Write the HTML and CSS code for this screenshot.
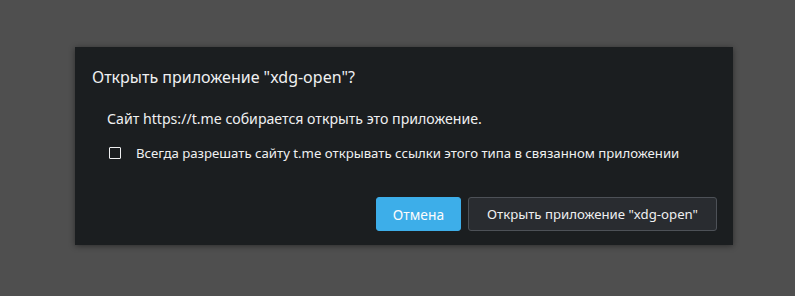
FILE: index.html
```html
<!DOCTYPE html>
<html lang="ru">
<head>
<meta charset="utf-8">
<link rel="stylesheet" href="styles.css">
</head>
<body>
<div class="dialog">
  <div class="title">Открыть приложение "xdg-open"?</div>
  <div class="message">Сайт https://t.me собирается открыть это приложение.</div>
  <label class="check-row">
    <span class="checkbox"></span>
    <span class="check-label">Всегда разрешать сайту t.me открывать ссылки этого типа в связанном приложении</span>
  </label>
  <div class="actions">
    <button class="btn btn-primary">Отмена</button>
    <button class="btn btn-secondary">Открыть приложение "xdg-open"</button>
  </div>
</div>
</body>
</html>
```

FILE: styles.css
```css
html, body {
  margin: 0;
  padding: 0;
}
body {
  background: #4f4f4f;
  width: 795px;
  height: 296px;
  overflow: hidden;
  font-family: "Noto Sans", "Open Sans", sans-serif;
  padding-top: 47px;
  padding-left: 75px;
  box-sizing: border-box;
}
.dialog {
  width: 658px;
  height: 198px;
  box-sizing: border-box;
  background: #1b1e20;
  box-shadow: 0 1px 6px rgba(0,0,0,0.45);
  padding: 19px 16px 14px 17px;
  display: flex;
  flex-direction: column;
  color: #fcfcfc;
}
.title {
  font-size: 16px;
  line-height: 22px;
  color: #eff0f1;
}
.message {
  margin-top: 21px;
  margin-left: 15px;
  font-size: 14.15px;
  line-height: 19px;
  color: #eff0f1;
}
.check-row {
  margin-top: 16px;
  margin-left: 17px;
  display: flex;
  align-items: center;
  gap: 15px;
  font-size: 13.2px;
  line-height: 18px;
  color: #eff0f1;
}
.checkbox {
  width: 12px;
  height: 12px;
  box-sizing: border-box;
  border: 1.5px solid #eff0f1;
  border-radius: 1px;
}
.actions {
  margin-top: auto;
  display: flex;
  justify-content: flex-end;
  gap: 7px;
}
.btn {
  height: 34px;
  box-sizing: border-box;
  font-family: "Noto Sans", "Open Sans", sans-serif;
  font-size: 13.2px;
  border-radius: 3px;
  padding: 0 14px;
  cursor: pointer;
}
.btn-primary {
  width: 85px;
  background: #3daee9;
  border: 1px solid #3daee9;
  color: #fcfcfc;
  font-size: 13.8px;
}
.btn-secondary {
  width: 249px;
  background: #292c30;
  border: 1px solid #4d5157;
  color: #eff0f1;
}
```
